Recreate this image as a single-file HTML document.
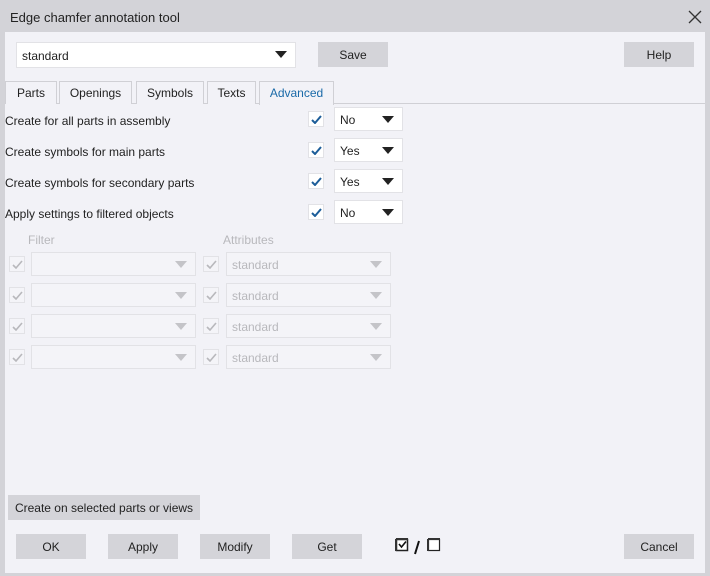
<!DOCTYPE html><html><head><style>
*{box-sizing:border-box;margin:0;padding:0}
body{width:710px;height:576px;background:#d3d3d8;font-family:"Liberation Sans",sans-serif;font-size:12px;color:#222;position:relative;overflow:hidden}
.a{position:absolute}
#main{left:5px;top:32px;width:700px;height:541px;background:#f2f2f7}
.btn{position:absolute;background:#d4d4d9;text-align:center;line-height:27px;height:25px;font-size:12px;color:#222}
.dd{position:absolute;background:#fff;border:1px solid #e2e2e6;height:24px;line-height:24px;padding-left:5px;font-size:12px}
.dd:after{content:"";position:absolute;right:8px;top:8px;border-left:6px solid transparent;border-right:6px solid transparent;border-top:7px solid #222}
.dis{background:#f4f4f8;color:#b8b8bc;border-color:#e2e2e6}
.dis:after{border-top-color:#c4c4c8}
.cb{position:absolute;width:16px;height:16px;background:#fff;border:1px solid #e2e2e6}
.cb svg{position:absolute;left:2px;top:3px}
.tab{position:absolute;top:81px;height:23px;border:1px solid #d0d0d5;border-bottom:none;text-align:center;line-height:23px;background:#f2f2f7}
.lbl{position:absolute;left:5px;font-size:12px}
</style></head><body>
<div class="a" style="left:10px;top:10px;font-size:13px">Edge chamfer annotation tool</div>
<svg class="a" style="left:688px;top:10px" width="14" height="14"><path d="M1 1L13 13M13 1L1 13" stroke="#333" stroke-width="1.3"/></svg>
<div class="a" id="main"></div>
<div class="dd" style="left:16px;top:42px;width:280px;height:26px;line-height:27px">standard</div>
<div class="btn" style="left:318px;top:42px;width:70px">Save</div>
<div class="btn" style="left:624px;top:42px;width:70px">Help</div>
<div class="a" style="left:5px;top:103px;width:700px;border-top:1px solid #d0d0d5"></div>
<div class="tab" style="left:5px;width:52px">Parts</div>
<div class="tab" style="left:59px;width:73px">Openings</div>
<div class="tab" style="left:136px;width:68px">Symbols</div>
<div class="tab" style="left:207px;width:49px">Texts</div>
<div class="tab" style="left:259px;width:75px;height:24px;color:#1a6aa8">Advanced</div>

<div class="lbl" style="top:114px">Create for all parts in assembly</div>
<div class="lbl" style="top:145px">Create symbols for main parts</div>
<div class="lbl" style="top:176px">Create symbols for secondary parts</div>
<div class="lbl" style="top:207px">Apply settings to filtered objects</div>
<div class="cb" style="left:308px;top:111px"><svg width="11" height="9"><path d="M1 5L4 8L10 1" stroke="#1c5d99" stroke-width="2" fill="none"/></svg></div>
<div class="cb" style="left:308px;top:142px"><svg width="11" height="9"><path d="M1 5L4 8L10 1" stroke="#1c5d99" stroke-width="2" fill="none"/></svg></div>
<div class="cb" style="left:308px;top:173px"><svg width="11" height="9"><path d="M1 5L4 8L10 1" stroke="#1c5d99" stroke-width="2" fill="none"/></svg></div>
<div class="cb" style="left:308px;top:204px"><svg width="11" height="9"><path d="M1 5L4 8L10 1" stroke="#1c5d99" stroke-width="2" fill="none"/></svg></div>
<div class="dd" style="left:334px;top:107px;width:69px">No</div>
<div class="dd" style="left:334px;top:138px;width:69px">Yes</div>
<div class="dd" style="left:334px;top:169px;width:69px">Yes</div>
<div class="dd" style="left:334px;top:200px;width:69px">No</div>

<div class="a" style="left:28px;top:233px;color:#b8b8bc">Filter</div>
<div class="a" style="left:223px;top:233px;color:#b8b8bc">Attributes</div>

<div class="cb" style="left:9px;top:256px;background:#f4f4f8"><svg width="11" height="9"><path d="M1 5L4 8L10 1" stroke="#b8b8bc" stroke-width="1.6" fill="none"/></svg></div>
<div class="dd dis" style="left:31px;top:252px;width:165px"></div>
<div class="cb" style="left:203px;top:256px;background:#f4f4f8"><svg width="11" height="9"><path d="M1 5L4 8L10 1" stroke="#b8b8bc" stroke-width="1.6" fill="none"/></svg></div>
<div class="dd dis" style="left:226px;top:252px;width:165px">standard</div>

<div class="cb" style="left:9px;top:287px;background:#f4f4f8"><svg width="11" height="9"><path d="M1 5L4 8L10 1" stroke="#b8b8bc" stroke-width="1.6" fill="none"/></svg></div>
<div class="dd dis" style="left:31px;top:283px;width:165px"></div>
<div class="cb" style="left:203px;top:287px;background:#f4f4f8"><svg width="11" height="9"><path d="M1 5L4 8L10 1" stroke="#b8b8bc" stroke-width="1.6" fill="none"/></svg></div>
<div class="dd dis" style="left:226px;top:283px;width:165px">standard</div>

<div class="cb" style="left:9px;top:318px;background:#f4f4f8"><svg width="11" height="9"><path d="M1 5L4 8L10 1" stroke="#b8b8bc" stroke-width="1.6" fill="none"/></svg></div>
<div class="dd dis" style="left:31px;top:314px;width:165px"></div>
<div class="cb" style="left:203px;top:318px;background:#f4f4f8"><svg width="11" height="9"><path d="M1 5L4 8L10 1" stroke="#b8b8bc" stroke-width="1.6" fill="none"/></svg></div>
<div class="dd dis" style="left:226px;top:314px;width:165px">standard</div>

<div class="cb" style="left:9px;top:349px;background:#f4f4f8"><svg width="11" height="9"><path d="M1 5L4 8L10 1" stroke="#b8b8bc" stroke-width="1.6" fill="none"/></svg></div>
<div class="dd dis" style="left:31px;top:345px;width:165px"></div>
<div class="cb" style="left:203px;top:349px;background:#f4f4f8"><svg width="11" height="9"><path d="M1 5L4 8L10 1" stroke="#b8b8bc" stroke-width="1.6" fill="none"/></svg></div>
<div class="dd dis" style="left:226px;top:345px;width:165px">standard</div>

<div class="btn" style="left:8px;top:495px;width:192px">Create on selected parts or views</div>
<div class="btn" style="left:16px;top:534px;width:70px">OK</div>
<div class="btn" style="left:108px;top:534px;width:70px">Apply</div>
<div class="btn" style="left:200px;top:534px;width:70px">Modify</div>
<div class="btn" style="left:292px;top:534px;width:70px">Get</div>
<div class="btn" style="left:624px;top:534px;width:70px">Cancel</div>
<svg class="a" style="left:395px;top:538px" width="46" height="18">
<rect x="1.5" y="1.5" width="11" height="11" fill="#fff" stroke="#222" stroke-width="1.5"/><path d="M1 1H13M1 1V13" stroke="#333" stroke-width="2"/>
<path d="M4 6L6.5 9L11 3.5" stroke="#111" stroke-width="1.6" fill="none"/>
<path d="M24 3L20 16" stroke="#111" stroke-width="2"/>
<rect x="33.5" y="1.5" width="11" height="11" fill="#fff" stroke="#222" stroke-width="1.2"/><path d="M33 1H45M33 1V13" stroke="#333" stroke-width="2"/>
</svg>
</body></html>
